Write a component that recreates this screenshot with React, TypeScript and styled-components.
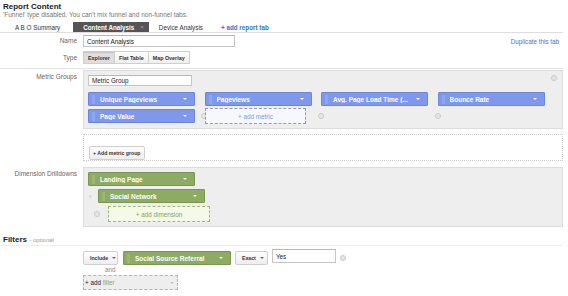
import React from 'react';
import styled, { createGlobalStyle, css } from 'styled-components';

const GlobalStyle = createGlobalStyle`
  html, body { margin: 0; padding: 0; background: #fff; }
  body { font-family: "Liberation Sans", Arial, Helvetica, sans-serif; color: #222; }
  * { box-sizing: border-box; }
`;

const Page = styled.div`
  width: 568px;
  height: 296px;
  overflow: hidden;
  background: #fff;
`;

const Title = styled.div`
  font-size: 8px;
  font-weight: bold;
  line-height: 9px;
  padding: 2px 0 0 3px;
  color: #222;
`;

const Note = styled.div`
  font-size: 6.5px;
  line-height: 8px;
  color: #777;
  padding-left: 3px;
  white-space: nowrap;
`;

const TabBar = styled.div`
  display: flex;
  align-items: flex-end;
  height: 11px;
  margin-top: 3px;
  width: 563px;
  padding-left: 5px;
  border-bottom: 1px solid #dedede;
`;

const Tab = styled.div<{ $active?: boolean }>`
  height: 10px;
  display: flex;
  align-items: center;
  padding: 0 12px 0 10px;
  font-size: 6.3px;
  color: #333;
  white-space: nowrap;
  ${(p) =>
    p.$active &&
    css`
      background: #555;
      color: #fff;
      font-weight: bold;
      margin-left: 1px;
      padding: 0 5px 0 10px;
    `}
`;

const TabClose = styled.span`
  margin-left: 6px;
  color: #aaa;
  font-weight: normal;
  font-size: 6px;
`;

const AddTab = styled.span`
  margin-left: 6px;
  height: 10px;
  display: flex;
  align-items: center;
  font-size: 6.3px;
  font-weight: bold;
  color: #3a72c8;
`;

const TopFields = styled.div`
  width: 563px;
  padding: 2px 0 4px;
  display: flex;
  flex-direction: column;
  gap: 4px;
  border-bottom: 1px solid #e4e4e4;
`;

const FieldRow = styled.div<{ $mt?: number; $align?: string }>`
  display: grid;
  grid-template-columns: 83px 480px;
  align-items: ${(p) => p.$align ?? 'center'};
  margin-top: ${(p) => p.$mt ?? 0}px;
`;

const Label = styled.div<{ $pt?: number }>`
  text-align: right;
  padding-right: 6px;
  padding-top: ${(p) => p.$pt ?? 0}px;
  font-size: 6.5px;
  line-height: 8px;
  color: #666;
  white-space: nowrap;
`;

const Line = styled.div`
  display: flex;
  align-items: center;
`;

const TextInput = styled.div<{ $w: number; $h: number }>`
  width: ${(p) => p.$w}px;
  height: ${(p) => p.$h}px;
  border: 1px solid #c6c6c6;
  border-top-color: #b8b8b8;
  background: #fff;
  font-size: 6.3px;
  color: #222;
  display: flex;
  align-items: center;
  padding-left: 3px;
`;

const LinkText = styled.span`
  margin-left: auto;
  padding-right: 4px;
  font-size: 6.3px;
  color: #3d78c9;
`;

const Segmented = styled.div`
  display: flex;
`;

const SegButton = styled.div<{ $active?: boolean }>`
  height: 13px;
  padding: 0 4px;
  display: flex;
  align-items: center;
  border: 1px solid #cfcfcf;
  margin-left: -1px;
  font-size: 5.4px;
  font-weight: bold;
  color: #333;
  background: linear-gradient(#fdfdfd, #efefef);
  &:first-child { margin-left: 0; }
  ${(p) =>
    p.$active &&
    css`
      background: #dedede;
      box-shadow: inset 0 1px 1px rgba(0, 0, 0, 0.12);
    `}
`;

const GroupBox = styled.div<{ $pb?: number }>`
  width: 480px;
  border: 1px solid #dcdcdc;
  background: #eeeeee;
  padding: 4px 4px ${(p) => p.$pb ?? 5}px 4px;
`;

const BoxHead = styled.div`
  display: flex;
  justify-content: space-between;
  align-items: flex-start;
  padding-right: 1px;
`;

const MetricGrid = styled.div`
  margin-top: 6px;
  display: grid;
  grid-template-columns: repeat(4, 107px);
  grid-auto-rows: 14px;
  column-gap: 9.5px;
  row-gap: 3px;
`;

const Cell = styled.div`
  display: flex;
  align-items: center;
`;

const Pill = styled.div<{ $kind: 'metric' | 'dim'; $w?: number }>`
  width: ${(p) => p.$w ?? 107}px;
  height: 14px;
  flex: none;
  display: flex;
  align-items: center;
  padding: 0 7px 0 3px;
  border-radius: 1px;
  font-size: 6.5px;
  font-weight: bold;
  color: #fff;
  white-space: nowrap;
  ${(p) =>
    p.$kind === 'metric'
      ? css`
          background: #7f98eb;
          border: 1px solid #6a86df;
        `
      : css`
          background: #8eab64;
          border: 1px solid #7a9751;
        `}
`;

const Handle = styled.span`
  width: 3px;
  height: 9px;
  flex: none;
  background-image: radial-gradient(circle, rgba(255, 255, 255, 0.4) 0.45px, transparent 0.65px);
  background-size: 1.5px 1.8px;
`;

const PillText = styled.span`
  margin-left: 5px;
  flex: 1;
  overflow: hidden;
`;

const Caret = styled.span<{ $color?: string }>`
  width: 0;
  height: 0;
  flex: none;
  border-left: 2px solid transparent;
  border-right: 2px solid transparent;
  border-top: 2px solid ${(p) => p.$color ?? '#fff'};
`;

const Remove = styled.span<{ $ml?: number }>`
  width: 6px;
  height: 6px;
  flex: none;
  border-radius: 50%;
  background: #e6e6e6;
  border: 1.3px solid #cbcbcb;
  margin-left: ${(p) => p.$ml ?? 0}px;
`;

const DropZone = styled.div<{ $kind: 'metric' | 'dim'; $w: number; $h: number; $ml?: number }>`
  width: ${(p) => p.$w}px;
  height: ${(p) => p.$h}px;
  flex: none;
  margin-left: ${(p) => p.$ml ?? 0}px;
  display: flex;
  align-items: center;
  justify-content: center;
  font-size: 6.3px;
  position: relative;
  ${(p) =>
    p.$kind === 'metric'
      ? css`
          background: #f6f8fe;
          border: 1px dashed #8f99b8;
          color: #7f98eb;
        `
      : css`
          background: #f5fae8;
          border: 1px dashed #a3b87a;
          color: #87a35b;
        `}
`;

const AddGroupArea = styled.div`
  width: 480px;
  height: 27px;
  border: 1px dotted #c9c9c9;
  padding: 6px 5px 0;
`;

const SmallButton = styled.div<{ $w?: number }>`
  height: 14px;
  ${(p) => (p.$w ? `width: ${p.$w}px; padding: 0 6px;` : 'padding: 0 3px;')}
  display: inline-flex;
  align-items: center;
  justify-content: space-between;
  gap: 4px;
  border: 1px solid #cfcfcf;
  border-radius: 2px;
  background: linear-gradient(#fdfdfd, #eeeeee);
  font-size: 5.2px;
  font-weight: bold;
  color: #333;
  white-space: nowrap;
`;

const DimStack = styled.div`
  display: flex;
  flex-direction: column;
  gap: 3px;
`;

const Chevron = styled.span`
  width: 10px;
  flex: none;
  color: #bbb;
  font-size: 7px;
  padding-left: 1px;
`;

const SectionHead = styled.div`
  margin-top: 8px;
  width: 563px;
  padding-left: 3px;
  line-height: 10px;
  border-bottom: 1px solid #eeeeee;
  font-size: 8px;
  font-weight: bold;
  color: #222;
`;

const Hint = styled.span`
  font-size: 6px;
  font-weight: normal;
  color: #999;
`;

const FilterRow = styled.div`
  display: flex;
  align-items: flex-start;
  padding-top: 5px;
`;

const Gap = styled.span<{ $w: number }>`
  width: ${(p) => p.$w}px;
  flex: none;
`;

const And = styled.div`
  margin-top: 1px;
  padding-left: 22px;
  font-size: 6.3px;
  line-height: 8px;
  color: #888;
`;

const AddFilter = styled.div`
  margin-top: 1px;
  width: 95px;
  height: 15px;
  background: #eeeeee;
  border: 1px dashed #b5b5b5;
  display: flex;
  align-items: center;
  justify-content: space-between;
  padding: 0 3px 0 1px;
  font-size: 6.3px;
  color: #222;
`;

const Green = styled.span`
  color: #8aa85e;
`;

const metrics = ['Unique Pageviews', 'Pageviews', 'Avg. Page Load Time (...', 'Bounce Rate'];

function MetricPill({ label }: { label: string }) {
  return (
    <Pill $kind="metric">
      <Handle />
      <PillText>{label}</PillText>
      <Caret />
    </Pill>
  );
}

function DimPill({ label, w }: { label: string; w?: number }) {
  return (
    <Pill $kind="dim" $w={w}>
      <Handle />
      <PillText>{label}</PillText>
      <Caret />
    </Pill>
  );
}

export default function App() {
  return (
    <Page>
      <GlobalStyle />
      <Title>Report Content</Title>
      <Note>'Funnel' type disabled. You can't mix funnel and non-funnel tabs.</Note>
      <TabBar>
        <Tab>A B O Summary</Tab>
        <Tab $active>
          Content Analysis<TabClose>×</TabClose>
        </Tab>
        <Tab>Device Analysis</Tab>
        <AddTab>+ add report tab</AddTab>
      </TabBar>

      <TopFields>
        <FieldRow>
          <Label>Name</Label>
          <Line>
            <TextInput $w={152} $h={12}>Content Analysis</TextInput>
            <LinkText>Duplicate this tab</LinkText>
          </Line>
        </FieldRow>
        <FieldRow>
          <Label>Type</Label>
          <Segmented>
            <SegButton $active>Explorer</SegButton>
            <SegButton>Flat Table</SegButton>
            <SegButton>Map Overlay</SegButton>
          </Segmented>
        </FieldRow>
      </TopFields>

      <FieldRow $mt={1} $align="start">
        <Label $pt={3}>Metric Groups</Label>
        <GroupBox>
          <BoxHead>
            <TextInput $w={104} $h={11}>Metric Group</TextInput>
            <Remove />
          </BoxHead>
          <MetricGrid>
            {metrics.map((m) => (
              <MetricPill key={m} label={m} />
            ))}
            <MetricPill label="Page Value" />
            <Cell>
              <Remove $ml={-4} />
              <DropZone $kind="metric" $w={101} $h={16} $ml={-1.5}>
                + add metric
              </DropZone>
            </Cell>
            <Cell>
              <Remove $ml={-3} />
            </Cell>
            <Cell>
              <Remove $ml={-3} />
            </Cell>
          </MetricGrid>
        </GroupBox>
      </FieldRow>

      <FieldRow $mt={5}>
        <span />
        <AddGroupArea>
          <SmallButton>+ Add metric group</SmallButton>
        </AddGroupArea>
      </FieldRow>

      <FieldRow $mt={6} $align="start">
        <Label $pt={2.5}>Dimension Drilldowns</Label>
        <GroupBox $pb={4}>
          <DimStack>
            <Line>
              <DimPill label="Landing Page" />
            </Line>
            <Line>
              <Chevron>›</Chevron>
              <DimPill label="Social Network" />
            </Line>
            <Line>
              <Remove $ml={6} />
              <DropZone $kind="dim" $w={102} $h={16} $ml={8}>
                + add dimension
              </DropZone>
            </Line>
          </DimStack>
        </GroupBox>
      </FieldRow>

      <SectionHead>
        Filters <Hint>- optional</Hint>
      </SectionHead>

      <FieldRow $align="start">
        <span />
        <div>
          <FilterRow>
            <SmallButton $w={35}>
              Include <Caret $color="#666" />
            </SmallButton>
            <Gap $w={5} />
            <DimPill label="Social Source Referral" w={108} />
            <Gap $w={4} />
            <SmallButton $w={33}>
              Exact <Caret $color="#666" />
            </SmallButton>
            <Gap $w={4} />
            <TextInput $w={64} $h={14} style={{ marginTop: -2 }}>
              Yes
            </TextInput>
            <Gap $w={4} />
            <Remove style={{ marginTop: 4 }} />
          </FilterRow>
          <And>and</And>
          <AddFilter>
            <span>
              + add <Green>filter</Green>
            </span>
            <Caret $color="#c4c4c4" />
          </AddFilter>
        </div>
      </FieldRow>
    </Page>
  );
}
